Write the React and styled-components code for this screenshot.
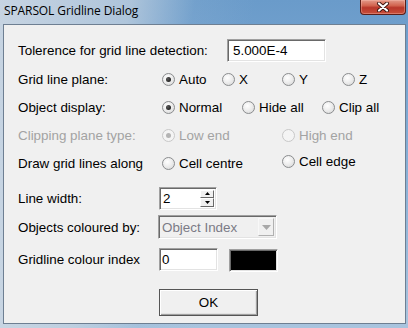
import React from "react";
import styled, { createGlobalStyle } from "styled-components";

const GlobalStyle = createGlobalStyle`
  html, body {
    margin: 0;
    padding: 0;
    background: #ffffff;
  }
`;

export default function App() {
  return (
    <>
      <GlobalStyle />
      <Window>
        <TitleBar>
          <Title>SPARSOL Gridline Dialog</Title>
          <CloseButton>
            <svg width="14" height="10" viewBox="0 0 14 10">
              <path
                d="M3 1.5 L11 8.5 M11 1.5 L3 8.5"
                stroke="#3a1410"
                strokeWidth="4"
                strokeLinecap="round"
              />
              <path
                d="M3 1.5 L11 8.5 M11 1.5 L3 8.5"
                stroke="#ffffff"
                strokeWidth="2.2"
                strokeLinecap="round"
              />
            </svg>
          </CloseButton>
        </TitleBar>
        <Client>
          <Row $mt={11}>
            <Label $w={209}>Tolerence for grid line detection:</Label>
            <TextBox $w={99} $pad={5}>5.000E-4</TextBox>
          </Row>
          <Row $mt={1}>
            <Label>Grid line plane:</Label>
            <RadioGroup $col={60}>
              <Radio checked>Auto</Radio>
              <Radio>X</Radio>
              <Radio>Y</Radio>
              <Radio>Z</Radio>
            </RadioGroup>
          </Row>
          <Row>
            <Label>Object display:</Label>
            <RadioGroup $col={80}>
              <Radio checked>Normal</Radio>
              <Radio>Hide all</Radio>
              <Radio>Clip all</Radio>
            </RadioGroup>
          </Row>
          <Row>
            <Label $disabled>Clipping plane type:</Label>
            <RadioGroup $col={120}>
              <Radio checked disabled>
                Low end
              </Radio>
              <Radio disabled>High end</Radio>
            </RadioGroup>
          </Row>
          <Row>
            <Label>Draw grid lines along</Label>
            <RadioGroup $col={120}>
              <Radio>Cell centre</Radio>
              <Radio lift>Cell edge</Radio>
            </RadioGroup>
          </Row>
          <Row $mt={7}>
            <Label>Line width:</Label>
            <SpinBox>
              <SpinText>2</SpinText>
              <SpinButtons>
                <SpinButton>
                  <svg width="5" height="3" viewBox="0 0 5 3">
                    <path d="M2.5 0 L5 3 L0 3 Z" fill="#000" />
                  </svg>
                </SpinButton>
                <SpinButton>
                  <svg width="5" height="3" viewBox="0 0 5 3">
                    <path d="M0 0 L5 0 L2.5 3 Z" fill="#000" />
                  </svg>
                </SpinButton>
              </SpinButtons>
            </SpinBox>
          </Row>
          <Row $mt={1}>
            <Label>Objects coloured by:</Label>
            <Combo>
              <ComboText>Object Index</ComboText>
              <ComboButton>
                <svg width="9" height="5" viewBox="0 0 9 5">
                  <path d="M0 0 L9 0 L4.5 5 Z" fill="#a8a8a8" />
                </svg>
              </ComboButton>
            </Combo>
          </Row>
          <Row $mt={4}>
            <Label>Gridline colour index</Label>
            <TextBox $w={59} $pad={2}>0</TextBox>
            <Swatch />
          </Row>
          <ButtonRow>
            <PushButton>OK</PushButton>
          </ButtonRow>
        </Client>
      </Window>
    </>
  );
}

function Radio({ children, checked, disabled, lift }) {
  return (
    <RadioOption $disabled={disabled} $lift={lift}>
      <RadioCircle $disabled={disabled}>
        {checked && <RadioDot $disabled={disabled} />}
      </RadioCircle>
      {children}
    </RadioOption>
  );
}

const Window = styled.div`
  width: 408px;
  height: 328px;
  box-sizing: border-box;
  padding: 0 2px 4px 3px;
  display: flex;
  flex-direction: column;
  background:
    linear-gradient(
      100deg,
      rgba(215, 222, 230, 0.85) 0%,
      rgba(196, 210, 224, 0.75) 28%,
      rgba(150, 182, 212, 0.2) 42%,
      rgba(120, 165, 205, 0) 55%
    ),
    linear-gradient(180deg, #6a9bca 0%, #80abd4 40%, #a9c4de 100%);
  font-family: "Liberation Sans", Arial, sans-serif;
`;

const TitleBar = styled.div`
  height: 24px;
  flex: none;
  display: flex;
  align-items: flex-start;
  justify-content: space-between;
  padding-left: 1px;
`;

const Title = styled.div`
  font-family: "Open Sans", "Noto Sans", sans-serif;
  font-size: 12px;
  line-height: 22px;
  color: #000000;
  letter-spacing: -0.1px;
`;

const CloseButton = styled.div`
  width: 46px;
  height: 15px;
  box-sizing: border-box;
  border: 1px solid #5a1e18;
  border-top: none;
  border-radius: 0 0 4px 4px;
  background: linear-gradient(180deg, #e39a8a 0%, #d2644f 40%, #b8372a 55%, #c84f3a 100%);
  box-shadow: inset 0 0 0 1px rgba(255, 200, 190, 0.35);
  display: flex;
  align-items: center;
  justify-content: center;
`;

const Client = styled.div`
  flex: 1;
  box-sizing: border-box;
  border: 1px solid #6e7f92;
  background: #f0f0f0;
  padding-left: 14px;
  display: flex;
  flex-direction: column;
  font-size: 13.4px;
  color: #000000;
`;

const Row = styled.div`
  height: 28px;
  flex: none;
  margin-top: ${(p) => p.$mt || 0}px;
  display: flex;
  align-items: center;
`;

const Label = styled.div`
  width: ${(p) => p.$w || 141}px;
  flex: none;
  color: ${(p) => (p.$disabled ? "#a3a3a3" : "#000000")};
  white-space: nowrap;
`;

const sunken = `
  box-sizing: border-box;
  border: 1px solid;
  border-color: #a0a0a0 #ffffff #ffffff #a0a0a0;
  box-shadow: inset 1px 1px 0 #696969, inset -1px -1px 0 #e3e3e3;
`;

const TextBox = styled.div`
  ${sunken}
  width: ${(p) => p.$w}px;
  height: 23px;
  background: #ffffff;
  padding-left: ${(p) => p.$pad}px;
  display: flex;
  align-items: center;
`;

const Swatch = styled.div`
  ${sunken}
  width: 49px;
  height: 23px;
  margin-left: 11px;
  margin-top: 2px;
  background: #000000;
`;

const RadioGroup = styled.div`
  display: grid;
  grid-template-columns: repeat(auto-fill, ${(p) => p.$col}px);
  flex: 1;
  margin-left: 3px;
`;

const RadioOption = styled.div`
  display: flex;
  align-items: center;
  gap: 4px;
  white-space: nowrap;
  color: ${(p) => (p.$disabled ? "#a3a3a3" : "#000000")};
  margin-bottom: ${(p) => (p.$lift ? 4 : 0)}px;
`;

const RadioCircle = styled.span`
  width: 13px;
  height: 13px;
  box-sizing: border-box;
  border-radius: 50%;
  border: 1px solid ${(p) => (p.$disabled ? "#c8c8c8" : "#8a8c8e")};
  background: ${(p) =>
    p.$disabled
      ? "#f4f4f4"
      : "radial-gradient(circle at 40% 35%, #ffffff 0%, #eeeeee 45%, #d4d4d4 100%)"};
  display: flex;
  align-items: center;
  justify-content: center;
  flex: none;
`;

const RadioDot = styled.span`
  width: 5px;
  height: 5px;
  border-radius: 50%;
  background: ${(p) =>
    p.$disabled ? "#b4b4b4" : "radial-gradient(circle at 35% 35%, #5a5a5a, #0c0c0c)"};
`;

const SpinBox = styled.div`
  ${sunken}
  width: 58px;
  height: 23px;
  background: #ffffff;
  display: flex;
  padding: 2px;
`;

const SpinText = styled.div`
  flex: 1;
  display: flex;
  align-items: center;
  padding-left: 1px;
`;

const SpinButtons = styled.div`
  width: 14px;
  display: flex;
  flex-direction: column;
`;

const SpinButton = styled.div`
  flex: 1;
  box-sizing: border-box;
  background: #f0f0f0;
  border: 1px solid;
  border-color: #ffffff #696969 #696969 #ffffff;
  display: flex;
  align-items: center;
  justify-content: center;
`;

const Combo = styled.div`
  ${sunken}
  width: 119px;
  height: 24px;
  margin-left: -1px;
  background: #f0f0f0;
  display: flex;
  padding: 2px;
`;

const ComboText = styled.div`
  flex: 1;
  display: flex;
  align-items: center;
  padding-left: 1px;
  color: #7b7b86;
`;

const ComboButton = styled.div`
  width: 16px;
  box-sizing: border-box;
  border: 1px solid;
  border-color: #f8f8f8 #b0b0b0 #b0b0b0 #f8f8f8;
  background: #f0f0f0;
  display: flex;
  align-items: center;
  justify-content: center;
`;

const ButtonRow = styled.div`
  margin-top: 16px;
  padding-left: 141px;
  display: flex;
`;

const PushButton = styled.div`
  width: 99px;
  height: 27px;
  box-sizing: border-box;
  border: 1px solid #555555;
  box-shadow: inset 1px 1px 0 #ffffff, inset -1px -1px 0 #a0a0a0, inset -2px -2px 0 #e3e3e3;
  background: #f0f0f0;
  display: flex;
  align-items: center;
  justify-content: center;
`;
